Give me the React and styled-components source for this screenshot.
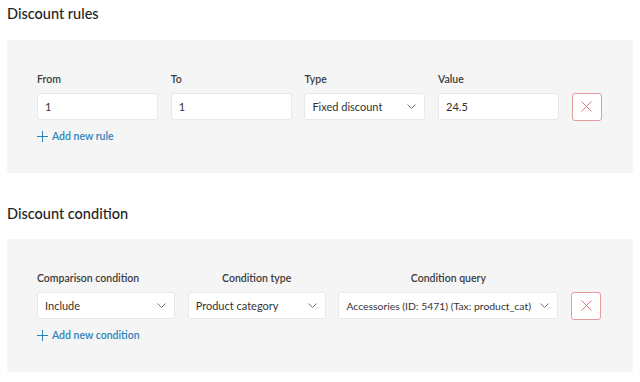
import React from 'react';
import styled, { createGlobalStyle } from 'styled-components';

const GlobalStyle = createGlobalStyle`
  body {
    margin: 0;
    background: #ffffff;
    font-family: "Segoe UI", Lato, "Open Sans", sans-serif;
    color: #1e1e1e;
  }
`;

const Page = styled.div`
  padding: 4px 7px 0 7px;
  width: 626px;
`;

const Heading = styled.h2`
  margin: 0;
  font-size: 14.5px;
  font-weight: 500;
  line-height: 20px;
  color: #1e1e1e;
`;

const Panel = styled.div`
  background: #f5f5f5;
  border-radius: 3px;
  margin: ${(p) => p.$top}px 0 ${(p) => p.$bottom}px 0;
  padding: 32px 30px 0 30px;
  height: 133px;
  box-sizing: border-box;
`;

const Row = styled.div`
  display: grid;
  grid-template-columns: ${(p) => p.$cols};
  column-gap: 12.7px;
  align-items: end;
`;

const Field = styled.div`
  display: flex;
  flex-direction: column;
`;

const Label = styled.div`
  font-size: 10.5px;
  font-weight: 600;
  color: #3c3c3c;
  line-height: 14px;
  margin-bottom: 7px;
  text-align: ${(p) => (p.$center ? 'center' : 'left')};
`;

const Box = styled.div`
  height: 27px;
  box-sizing: border-box;
  background: #ffffff;
  border: 1px solid #e8e8e8;
  border-radius: 3px;
  display: flex;
  align-items: center;
  gap: 4px;
  padding: 0 8px 0 7px;
  font-size: ${(p) => (p.$tight ? '10.4px' : '11px')};
  color: #333333;
  white-space: nowrap;
  overflow: hidden;
`;

const BoxText = styled.span`
  flex: 1;
  overflow: hidden;
`;

const DeleteButton = styled.button`
  width: 30px;
  height: 28px;
  margin-bottom: -0.5px;
  box-sizing: border-box;
  background: #ffffff;
  border: 1px solid #e39aa0;
  border-radius: 3px;
  padding: 0;
  display: flex;
  align-items: center;
  justify-content: center;
`;

const AddLink = styled.a`
  display: inline-flex;
  align-items: center;
  gap: 4px;
  margin-top: 9px;
  font-size: 10.5px;
  font-weight: 600;
  color: #2b83b8;
  text-decoration: none;
  line-height: 14px;
`;

function Chevron() {
  return (
    <svg width="9" height="5" viewBox="0 0 9 5" fill="none">
      <path d="M0.5 0.5l4 4 4-4" stroke="#666" strokeWidth="0.9" />
    </svg>
  );
}

function Cross() {
  return (
    <svg width="11" height="11" viewBox="0 0 11 11" fill="none">
      <path d="M0.5 0.5l10 10M10.5 0.5l-10 10" stroke="#e0747c" strokeWidth="1" />
    </svg>
  );
}

function Plus() {
  return (
    <svg width="11" height="11" viewBox="0 0 11 11" fill="none">
      <path d="M5.5 0v11M0 5.5h11" stroke="#2b83b8" strokeWidth="1" />
    </svg>
  );
}

function Input({ value }) {
  return (
    <Box>
      <BoxText>{value}</BoxText>
    </Box>
  );
}

function Select({ value, tight }) {
  return (
    <Box $tight={tight}>
      <BoxText>{value}</BoxText>
      <Chevron />
    </Box>
  );
}

export default function App() {
  return (
    <>
      <GlobalStyle />
      <Page>
        <Heading>Discount rules</Heading>
        <Panel $top={16} $bottom={31}>
          <Row $cols="121px 121px 121px 121px 30px">
            <Field>
              <Label>From</Label>
              <Input value="1" />
            </Field>
            <Field>
              <Label>To</Label>
              <Input value="1" />
            </Field>
            <Field>
              <Label>Type</Label>
              <Select value="Fixed discount" />
            </Field>
            <Field>
              <Label>Value</Label>
              <Input value="24.5" />
            </Field>
            <DeleteButton aria-label="Remove rule">
              <Cross />
            </DeleteButton>
          </Row>
          <AddLink href="#">
            <Plus />
            Add new rule
          </AddLink>
        </Panel>

        <Heading>Discount condition</Heading>
        <Panel $top={15} $bottom={0}>
          <Row $cols="138px 138px 220px 30px">
            <Field>
              <Label>Comparison condition</Label>
              <Select value="Include" />
            </Field>
            <Field>
              <Label $center>Condition type</Label>
              <Select value="Product category" />
            </Field>
            <Field>
              <Label $center>Condition query</Label>
              <Select value="Accessories (ID: 5471) (Tax: product_cat)" tight />
            </Field>
            <DeleteButton aria-label="Remove condition">
              <Cross />
            </DeleteButton>
          </Row>
          <AddLink href="#">
            <Plus />
            Add new condition
          </AddLink>
        </Panel>
      </Page>
    </>
  );
}
